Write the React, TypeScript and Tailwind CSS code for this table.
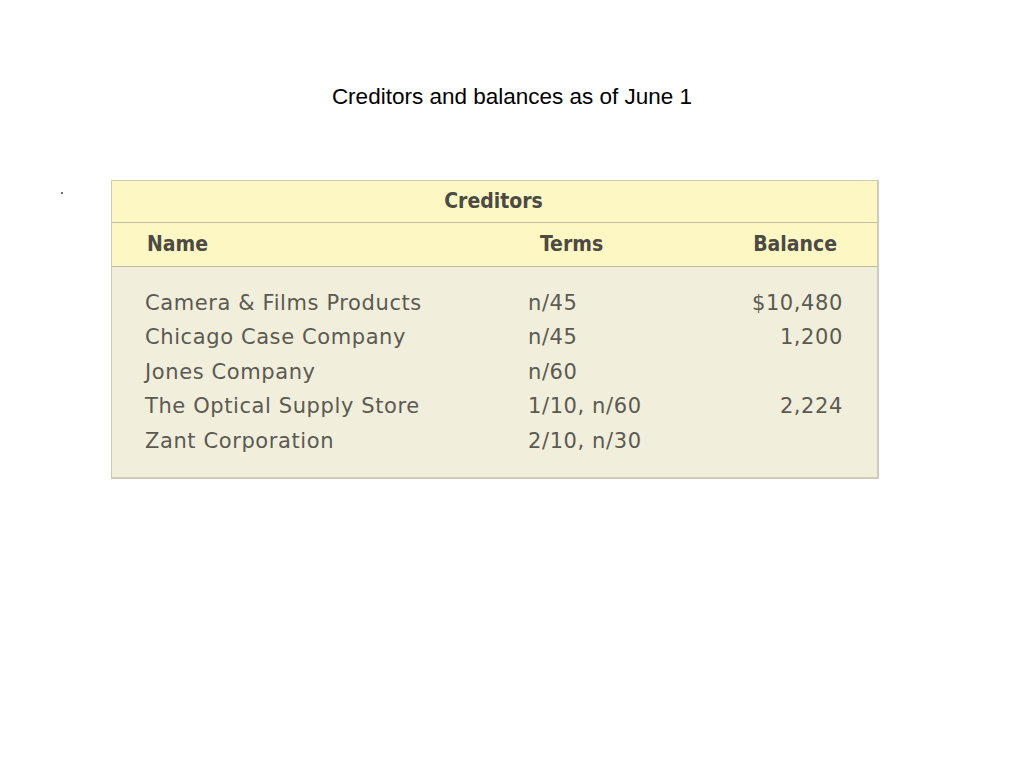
import React from 'react';

type Row = { name: string; terms: string; balance: string };

const rows: Row[] = [
  { name: 'Camera & Films Products', terms: 'n/45', balance: '$10,480' },
  { name: 'Chicago Case Company', terms: 'n/45', balance: '1,200' },
  { name: 'Jones Company', terms: 'n/60', balance: '' },
  { name: 'The Optical Supply Store', terms: '1/10, n/60', balance: '2,224' },
  { name: 'Zant Corporation', terms: '2/10, n/30', balance: '' },
];

const App: React.FC = () => {
  return (
    <div className="w-[1024px] h-[768px] bg-white relative">
      <h1 className="pt-[83px] text-center text-[22.5px] leading-[28px] text-black font-['Liberation_Sans',Arial,sans-serif]">
        Creditors and balances as of June 1
      </h1>

      <span className="absolute left-[61px] top-[192px] w-[2px] h-[2px] bg-gray-500" />

      <div className="mt-[69px] ml-[111px] w-[768px] border border-[#cfcbb8] border-b-2 border-r-2 font-['DejaVu_Sans',sans-serif]">
        {/* title row */}
        <div className="h-[42px] bg-[#fdf7c3] flex items-center justify-center border-b border-[#bfbba6]">
          <span className="font-['DejaVu_Sans_Condensed',sans-serif] font-bold text-[21px] text-[#4b4a43] -ml-[2px]">
            Creditors
          </span>
        </div>

        {/* column headers */}
        <div className="h-[44px] bg-[#fdf7c3] flex items-center border-b border-[#bfbba6] pl-[35px] pr-[40px] font-['DejaVu_Sans_Condensed',sans-serif] font-bold text-[21px] text-[#4b4a43]">
          <span className="w-[393px]">Name</span>
          <span className="w-[120px]">Terms</span>
          <span className="flex-1 text-right">Balance</span>
        </div>

        {/* body */}
        <div className="bg-[#f1eedc] pt-[19px] pb-[18px] pl-[33px] pr-[34px] text-[21px] tracking-[0.6px] text-[#5b5a52]">
          {rows.map((r) => (
            <div key={r.name} className="h-[34.6px] flex items-center">
              <span className="w-[383px]">{r.name}</span>
              <span className="w-[150px]">{r.terms}</span>
              <span className="flex-1 text-right">{r.balance}</span>
            </div>
          ))}
        </div>
      </div>
    </div>
  );
};

export default App;
